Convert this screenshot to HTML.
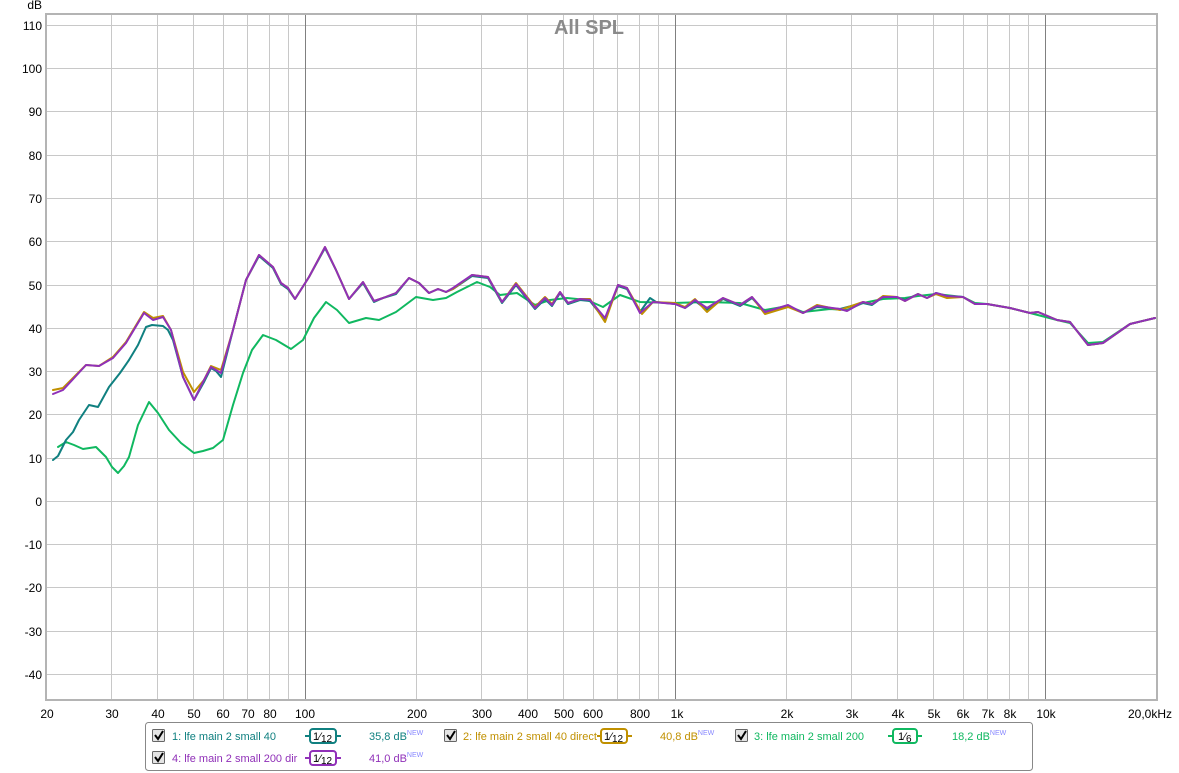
<!DOCTYPE html>
<html><head><meta charset="utf-8"><style>
body{margin:0;background:#fff;width:1179px;height:773px;overflow:hidden;font-family:"Liberation Sans",Arial,sans-serif;}
svg{position:absolute;left:0;top:0}
</style></head><body>
<svg width="1179" height="773" viewBox="0 0 1179 773" xmlns="http://www.w3.org/2000/svg" font-family="Liberation Sans, Arial, sans-serif">
<rect x="0" y="0" width="1179" height="773" fill="#fff"/>
<g stroke="#c8c8c8" stroke-width="1" shape-rendering="crispEdges">
<line x1="47" x2="1156" y1="25.5" y2="25.5"/><line x1="47" x2="1156" y1="68.5" y2="68.5"/><line x1="47" x2="1156" y1="111.5" y2="111.5"/><line x1="47" x2="1156" y1="155.5" y2="155.5"/><line x1="47" x2="1156" y1="198.5" y2="198.5"/><line x1="47" x2="1156" y1="241.5" y2="241.5"/><line x1="47" x2="1156" y1="285.5" y2="285.5"/><line x1="47" x2="1156" y1="328.5" y2="328.5"/><line x1="47" x2="1156" y1="371.5" y2="371.5"/><line x1="47" x2="1156" y1="414.5" y2="414.5"/><line x1="47" x2="1156" y1="458.5" y2="458.5"/><line x1="47" x2="1156" y1="501.5" y2="501.5"/><line x1="47" x2="1156" y1="544.5" y2="544.5"/><line x1="47" x2="1156" y1="587.5" y2="587.5"/><line x1="47" x2="1156" y1="631.5" y2="631.5"/><line x1="47" x2="1156" y1="674.5" y2="674.5"/>
<line y1="14" y2="700" x1="111.5" x2="111.5"/><line y1="14" y2="700" x1="157.5" x2="157.5"/><line y1="14" y2="700" x1="193.5" x2="193.5"/><line y1="14" y2="700" x1="223.5" x2="223.5"/><line y1="14" y2="700" x1="247.5" x2="247.5"/><line y1="14" y2="700" x1="269.5" x2="269.5"/><line y1="14" y2="700" x1="288.5" x2="288.5"/>
<line y1="14" y2="700" x1="416.5" x2="416.5"/><line y1="14" y2="700" x1="481.5" x2="481.5"/><line y1="14" y2="700" x1="527.5" x2="527.5"/><line y1="14" y2="700" x1="563.5" x2="563.5"/><line y1="14" y2="700" x1="593.5" x2="593.5"/><line y1="14" y2="700" x1="617.5" x2="617.5"/><line y1="14" y2="700" x1="639.5" x2="639.5"/><line y1="14" y2="700" x1="658.5" x2="658.5"/>
<line y1="14" y2="700" x1="786.5" x2="786.5"/><line y1="14" y2="700" x1="851.5" x2="851.5"/><line y1="14" y2="700" x1="897.5" x2="897.5"/><line y1="14" y2="700" x1="933.5" x2="933.5"/><line y1="14" y2="700" x1="963.5" x2="963.5"/><line y1="14" y2="700" x1="987.5" x2="987.5"/><line y1="14" y2="700" x1="1009.5" x2="1009.5"/><line y1="14" y2="700" x1="1028.5" x2="1028.5"/>
</g>
<g stroke="#808080" stroke-width="1" shape-rendering="crispEdges">
<line y1="14" y2="700" x1="305.5" x2="305.5"/><line y1="14" y2="700" x1="675.5" x2="675.5"/><line y1="14" y2="700" x1="1045.5" x2="1045.5"/>
</g>
<rect x="46" y="14" width="1111" height="686" fill="none" stroke="#b4b4b4" stroke-width="2"/>
<text x="589" y="34" text-anchor="middle" font-size="20" font-weight="bold" fill="#8a8a8a">All SPL</text>
<g font-size="12" fill="#000" text-anchor="end">
<text x="42" y="9">dB</text>
<text x="42" y="30">110</text><text x="42" y="73">100</text><text x="42" y="116">90</text><text x="42" y="160">80</text><text x="42" y="203">70</text><text x="42" y="246">60</text><text x="42" y="290">50</text><text x="42" y="333">40</text><text x="42" y="376">30</text><text x="42" y="419">20</text><text x="42" y="463">10</text><text x="42" y="506">0</text><text x="42" y="549">-10</text><text x="42" y="592">-20</text><text x="42" y="636">-30</text><text x="42" y="679">-40</text>
</g>
<g font-size="12" fill="#000" text-anchor="middle">
<text x="47" y="718">20</text><text x="112" y="718">30</text><text x="158" y="718">40</text><text x="194" y="718">50</text><text x="223" y="718">60</text><text x="248" y="718">70</text><text x="270" y="718">80</text><text x="305" y="718">100</text><text x="417" y="718">200</text><text x="482" y="718">300</text><text x="528" y="718">400</text><text x="564" y="718">500</text><text x="593" y="718">600</text><text x="640" y="718">800</text><text x="677" y="718">1k</text><text x="787" y="718">2k</text><text x="852" y="718">3k</text><text x="898" y="718">4k</text><text x="934" y="718">5k</text><text x="963" y="718">6k</text><text x="988" y="718">7k</text><text x="1010" y="718">8k</text><text x="1046" y="718">10k</text><text x="1150" y="718">20,0kHz</text>
</g>
<g fill="none" stroke-width="2" stroke-linejoin="round" stroke-linecap="round">
<!-- green -->
<polyline stroke="#10b860" points="58,447 66,442 74,445 83,449 96,447 106,457 112,467 118,473 124,466 129,457 138,425 149,402 158,413 169,430 181,443 194,453 203,451 213,448 223,440 233,405 243,373 252,350 263,335 276,340 291,349 303,340 314,318 326,302 337,310 349,323 366,318 379,320 396,312 416,297 433,300 446,298 457,292 477,282 490,287 500,295 517,293 535,305 550,300 567,298 587,300 603,307 620,295 640,302 673,303 707,302 740,303 765,310 788,306 803,312 830,309 847,310 863,303 883,299 905,298 918,296 936,294 963,297 975,303 987,304 1010,308 1030,313 1057,320 1070,323 1088,343 1103,342 1130,324 1155,318"/>
<!-- teal -->
<polyline stroke="#108080" points="53,460 58,456 66,440 73,432 79,420 89,405 98,407 109,387 120,373 129,360 138,345 146,327 152,325 163,326 168,330 173,340 183,377 194,400 204,382 211,368 216,371 221,377 233,330 246,280 259,256 273,268 281,284 288,289 295,299 309,277 325,248 336,270 349,299 363,283 374,302 383,298 396,294 409,278 419,283 429,293 438,289 446,292 453,289 472,276 488,278 502,303 516,285 535,309 545,299 552,306 560,293 568,304 580,300 590,301 605,320 618,286 627,289 640,312 650,298 656,302 675,304 685,308 695,301 707,310 723,299 740,306 752,298 765,312 788,306 803,313 817,307 840,309 863,303 872,305 883,297 897,297 905,300 918,294 927,298 936,293 947,296 963,297 975,304 987,304 1010,308 1030,313 1038,312 1057,320 1070,322 1088,345 1103,343 1130,324 1155,318"/>
<!-- gold -->
<polyline stroke="#c09000" points="53,390 63,388 75,376 86,365 99,366 113,357 126,342 144,312 153,318 163,316 171,330 183,372 194,392 204,380 211,366 221,370 233,330 246,280 259,255 273,267 281,283 288,288 295,299 309,277 325,247 336,270 349,299 363,282 374,301 383,298 396,293 409,278 419,283 429,293 438,289 446,292 453,289 472,275 488,277 502,302 516,283 535,307 545,297 552,304 560,292 568,303 580,299 590,299 605,322 618,285 627,288 642,314 653,302 675,303 685,307 695,299 707,312 723,298 740,305 752,297 765,314 788,307 803,313 817,305 840,310 863,302 872,304 883,296 897,297 905,301 918,294 927,298 936,294 947,298 963,297 975,304 987,304 1010,308 1030,313 1038,312 1057,320 1070,322 1088,345 1103,343 1130,324 1155,318"/>
<!-- purple -->
<polyline stroke="#9030b8" points="53,394 63,390 75,377 86,365 99,366 113,358 126,343 144,313 153,320 163,317 171,330 183,377 194,400 204,380 211,367 221,373 233,330 246,280 259,255 273,267 281,283 288,288 295,299 309,277 325,247 336,270 349,299 363,282 374,301 383,298 396,293 409,278 419,283 429,293 438,289 446,292 453,288 472,275 488,277 502,302 516,284 535,308 545,298 552,305 560,292 568,303 580,299 590,300 605,318 618,285 627,288 640,313 653,302 675,304 685,308 695,300 707,308 723,298 740,305 752,297 765,312 788,305 803,313 817,306 840,309 847,311 863,302 872,304 883,297 897,297 905,301 918,294 927,298 936,293 947,296 963,297 975,304 987,304 1010,308 1030,313 1038,312 1057,320 1070,322 1088,345 1103,343 1130,324 1155,318"/>
</g>
<!-- legend -->
<rect x="145.5" y="722.5" width="887" height="48" rx="3" fill="#fff" stroke="#888" stroke-width="1"/>
<g stroke="#666" fill="#e4e4e4">
<rect x="152.5" y="729.5" width="12" height="12" rx="1"/><rect x="444.5" y="729.5" width="12" height="12" rx="1"/><rect x="735.5" y="729.5" width="12" height="12" rx="1"/><rect x="152.5" y="751.5" width="12" height="12" rx="1"/>
</g>
<g fill="none" stroke="#000" stroke-width="2">
<path d="M155,735 l3,4 l5,-8"/><path d="M447,735 l3,4 l5,-8"/><path d="M738,735 l3,4 l5,-8"/><path d="M155,757 l3,4 l5,-8"/>
</g>
<g font-size="11">
<text x="172" y="740" fill="#108080">1: lfe main 2 small 40</text>
<text x="463" y="740" fill="#c09000">2: lfe main 2 small 40 direct</text>
<text x="754" y="740" fill="#10b860">3: lfe main 2 small 200</text>
<text x="172" y="762" fill="#9030b8">4: lfe main 2 small 200 dir</text>
<text x="369" y="740" fill="#108080">35,8 dB<tspan font-size="7" fill="#8888ff" dy="-5">NEW</tspan></text>
<text x="660" y="740" fill="#c09000">40,8 dB<tspan font-size="7" fill="#8888ff" dy="-5">NEW</tspan></text>
<text x="952" y="740" fill="#10b860">18,2 dB<tspan font-size="7" fill="#8888ff" dy="-5">NEW</tspan></text>
<text x="369" y="762" fill="#9030b8">41,0 dB<tspan font-size="7" fill="#8888ff" dy="-5">NEW</tspan></text>
</g>
<g stroke-width="2" fill="#fff">
<g stroke="#108080"><line x1="305" x2="341" y1="736" y2="736"/><rect x="310" y="729" width="26" height="14" rx="3"/></g>
<g stroke="#c09000"><line x1="597" x2="632" y1="736" y2="736"/><rect x="601" y="729" width="26" height="14" rx="3"/></g>
<g stroke="#10b860"><line x1="888" x2="922" y1="736" y2="736"/><rect x="893" y="729" width="24" height="14" rx="3"/></g>
<g stroke="#9030b8"><line x1="305" x2="341" y1="758" y2="758"/><rect x="310" y="751" width="26" height="14" rx="3"/></g>
</g>
<g font-size="11" fill="#000">
<text x="313" y="740">1⁄<tspan font-size="10" dy="2">12</tspan></text>
<text x="604" y="740">1⁄<tspan font-size="10" dy="2">12</tspan></text>
<text x="898" y="740">1⁄<tspan font-size="10" dy="2">6</tspan></text>
<text x="313" y="762">1⁄<tspan font-size="10" dy="2">12</tspan></text>
</g>
</svg>
</body></html>
